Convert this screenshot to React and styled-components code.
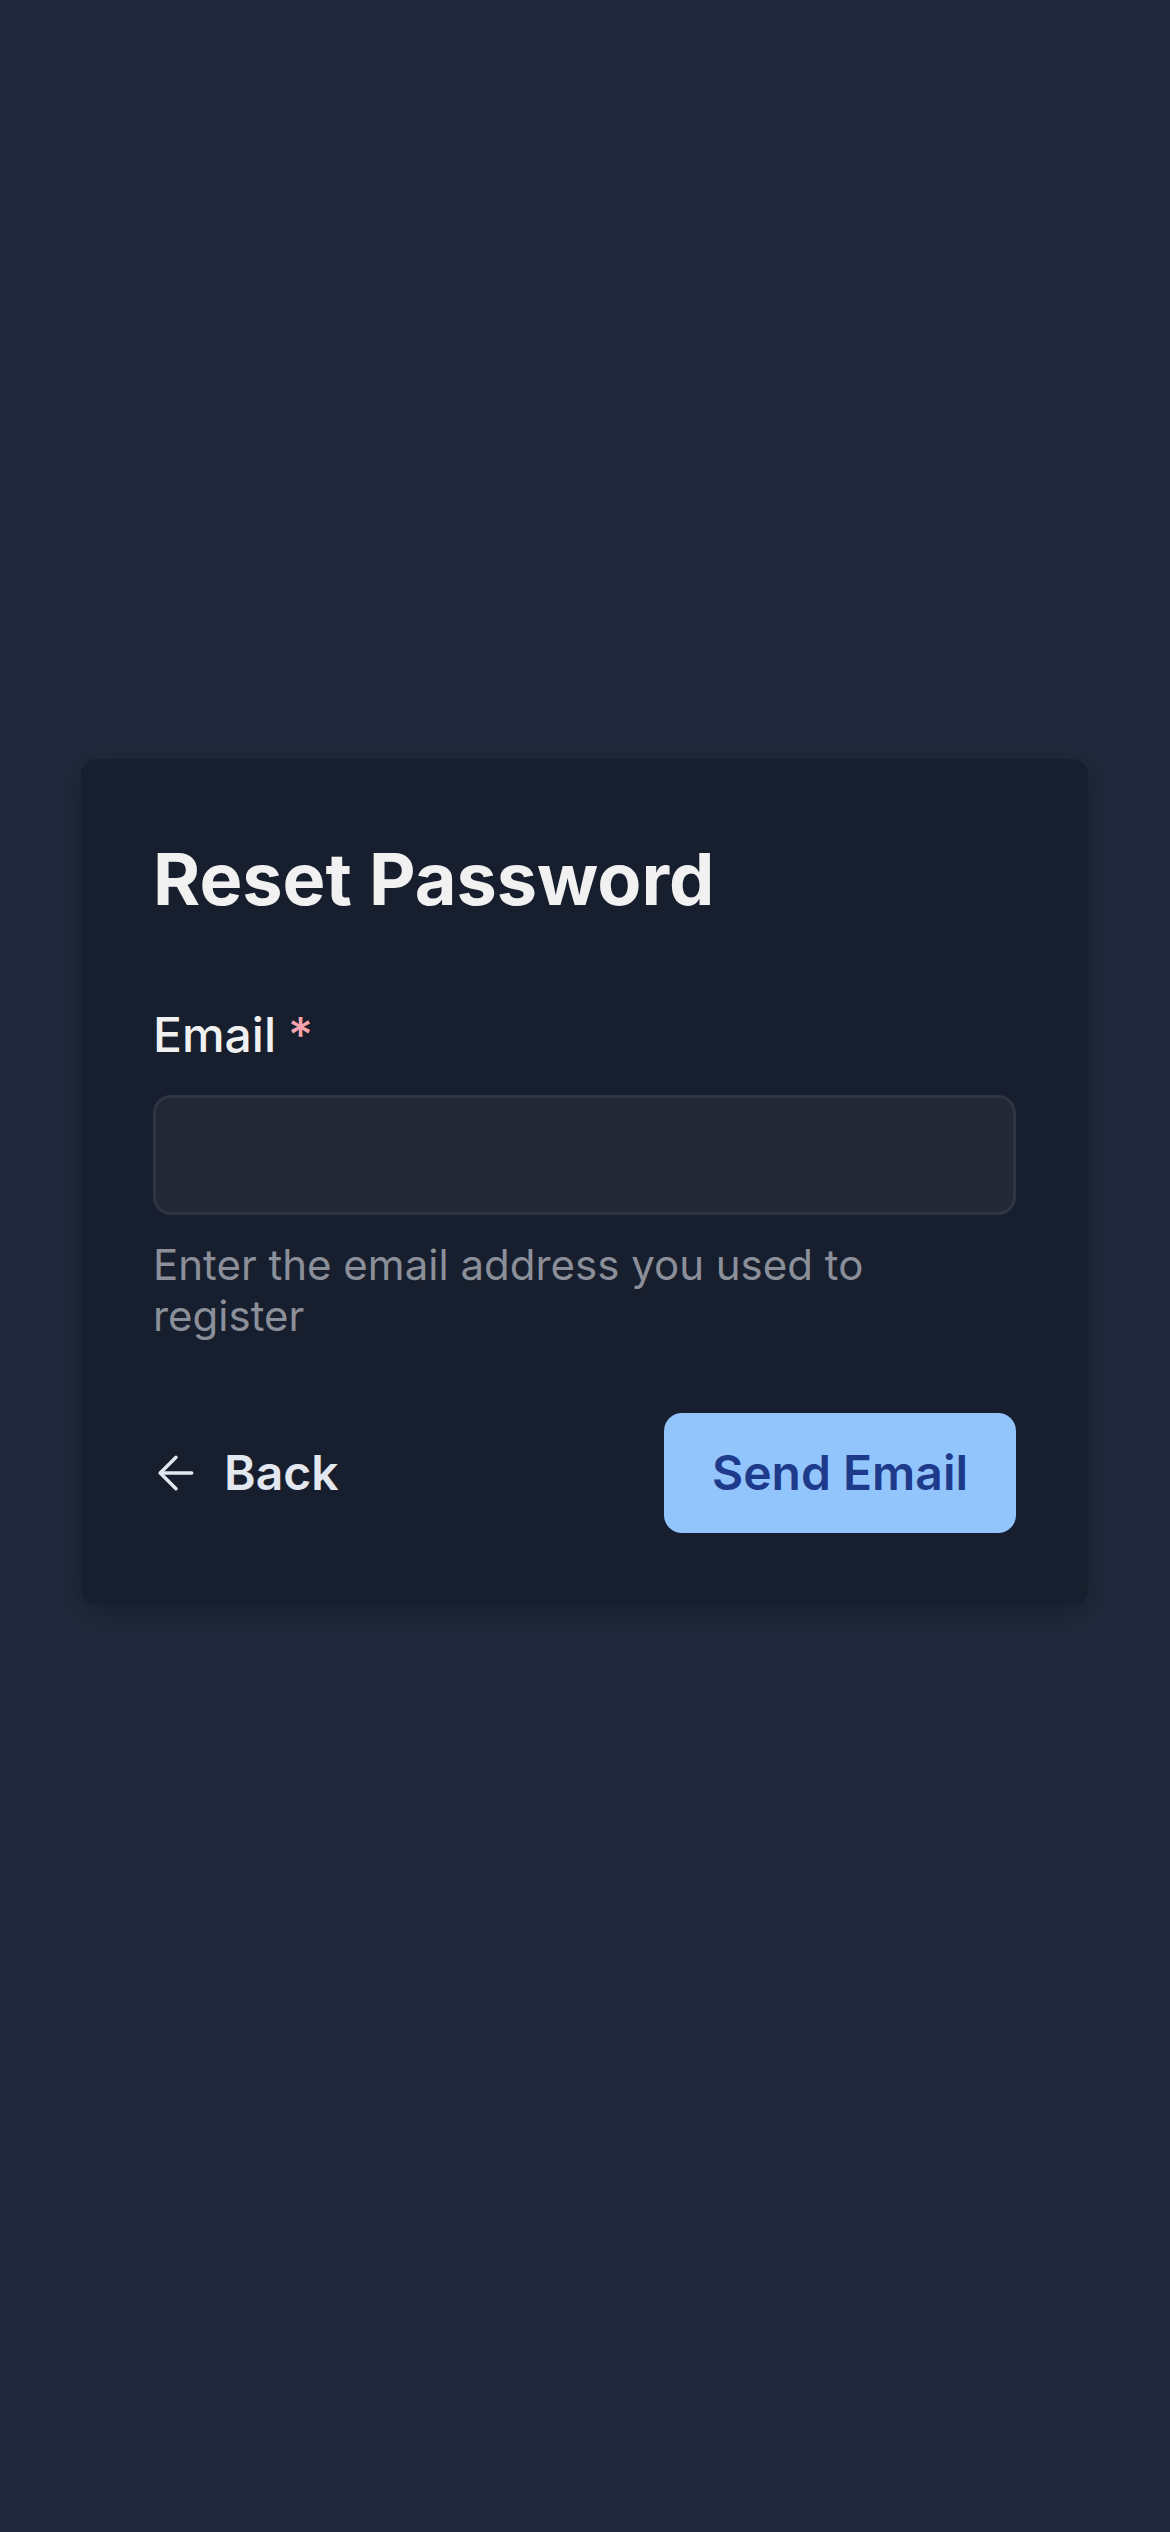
import React from 'react';
import styled, { createGlobalStyle } from 'styled-components';

const GlobalStyle = createGlobalStyle`
  * { box-sizing: border-box; }
  html, body {
    margin: 0;
    padding: 0;
    background: #1f293b;
    font-family: Inter, "Noto Sans", "Liberation Sans", sans-serif;
  }
`;

const Page = styled.main`
  min-height: 2532px;
  display: flex;
  align-items: center;
  justify-content: center;
  padding: 0 82px 169px 81px;
  background: #1f293b;
`;

const Card = styled.section`
  width: 100%;
  background: #171e2d;
  border-radius: 16px;
  padding: 72px;
  box-shadow: 0 8px 24px rgba(0, 0, 0, 0.22);
`;

const Title = styled.h1`
  margin: 0 0 72px;
  font-size: 72px;
  line-height: 96px;
  font-weight: 700;
  color: #f1f1f2;
`;

const Label = styled.label`
  display: block;
  margin-bottom: 24px;
  font-size: 48px;
  line-height: 72px;
  font-weight: 500;
  color: #f0f0f1;
`;

const Required = styled.span`
  color: #f7a3ad;
  margin-left: 12px;
`;

const Input = styled.input`
  display: block;
  width: 100%;
  height: 120px;
  background: #222836;
  border: 3px solid #2e3545;
  border-radius: 18px;
  padding: 0 36px;
  font-family: inherit;
  font-size: 48px;
  color: #f0f0f1;
  outline: none;
`;

const Helper = styled.p`
  margin: 24px 0 0;
  max-width: 780px;
  font-size: 42px;
  line-height: 51px;
  font-weight: 400;
  color: #8b8f99;
`;

const Actions = styled.div`
  display: flex;
  align-items: center;
  justify-content: space-between;
  margin-top: 72px;
`;

const BackButton = styled.button`
  display: flex;
  align-items: center;
  gap: 21px;
  padding: 0;
  margin-left: -4px;
  background: none;
  border: none;
  cursor: pointer;
  font-family: inherit;
  font-size: 48px;
  line-height: 72px;
  font-weight: 600;
  color: #e3e8f0;
`;

const SendButton = styled.button`
  padding: 24px 48px;
  background: #93c5fd;
  border: none;
  border-radius: 18px;
  cursor: pointer;
  font-family: inherit;
  font-size: 48px;
  line-height: 72px;
  font-weight: 600;
  color: #1e3a8a;
`;

const ArrowLeft = () => (
  <svg width="54" height="54" viewBox="0 0 24 24" fill="none" stroke="currentColor" strokeWidth="1.5" strokeLinecap="round" strokeLinejoin="round">
    <path d="m12 19-7-7 7-7" />
    <path d="M19 12H5" />
  </svg>
);

export default function App() {
  return (
    <>
      <GlobalStyle />
      <Page>
        <Card>
          <Title>Reset Password</Title>
          <Label htmlFor="email">
            Email<Required>*</Required>
          </Label>
          <Input id="email" type="email" />
          <Helper>Enter the email address you used to register</Helper>
          <Actions>
            <BackButton type="button">
              <ArrowLeft />
              Back
            </BackButton>
            <SendButton type="button">Send Email</SendButton>
          </Actions>
        </Card>
      </Page>
    </>
  );
}
